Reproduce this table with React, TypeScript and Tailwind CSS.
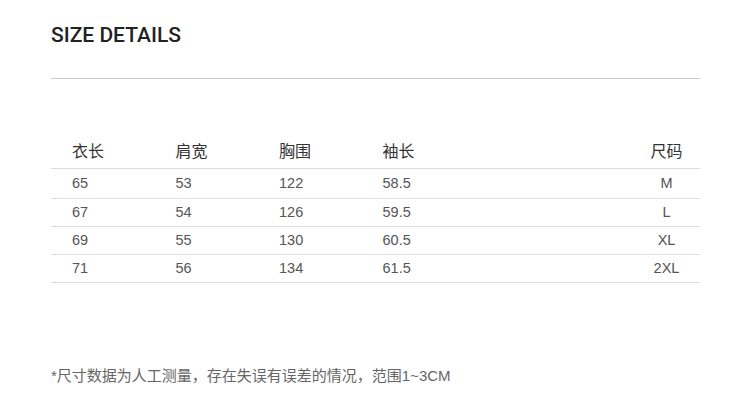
import React from "react";

const rows = [
  ["65", "53", "122", "58.5", "M"],
  ["67", "54", "126", "59.5", "L"],
  ["69", "55", "130", "60.5", "XL"],
  ["71", "56", "134", "61.5", "2XL"],
];

export default function App() {
  return (
    <div
      className="w-[750px] h-[407px] bg-white pl-[51px] pr-[50px] pt-[21px]"
      style={{ fontFamily: '"Liberation Sans", "Noto Sans CJK SC", sans-serif' }}
    >
      <div
        className="h-[28px] leading-[28px] text-[21px] font-medium text-[#222]"
        style={{ fontFamily: 'Roboto, "Liberation Sans", sans-serif' }}
      >
        SIZE DETAILS
      </div>
      <div className="mt-[29px] border-t border-[#cccccc]" />
      <div className="mt-[57px]">
        <div className="flex h-[33px] items-center border-b border-[#dddddd] pl-[21px] text-[16px] text-[#333]">
          <div className="w-[103.5px]">衣长</div>
          <div className="w-[103.5px]">肩宽</div>
          <div className="w-[103.5px]">胸围</div>
          <div className="w-[103.5px]">袖长</div>
          <div className="flex-1" />
          <div className="w-[67px] text-center">尺码</div>
        </div>
        {rows.map((r, i) => (
          <div
            key={i}
            className={`flex items-center border-b border-[#dddddd] pl-[21px] text-[14.5px] text-[#555] ${i === 0 ? "h-[30px]" : "h-[28px]"}`}
          >
            <div className="w-[103.5px]">{r[0]}</div>
            <div className="w-[103.5px]">{r[1]}</div>
            <div className="w-[103.5px]">{r[2]}</div>
            <div className="w-[103.5px]">{r[3]}</div>
            <div className="flex-1" />
            <div className="w-[67px] text-center">{r[4]}</div>
          </div>
        ))}
      </div>
      <div className="mt-[83px] h-[20px] leading-[20px] text-[15px] text-[#666]">
        *尺寸数据为人工测量，存在失误有误差的情况，范围1~3CM
      </div>
    </div>
  );
}
